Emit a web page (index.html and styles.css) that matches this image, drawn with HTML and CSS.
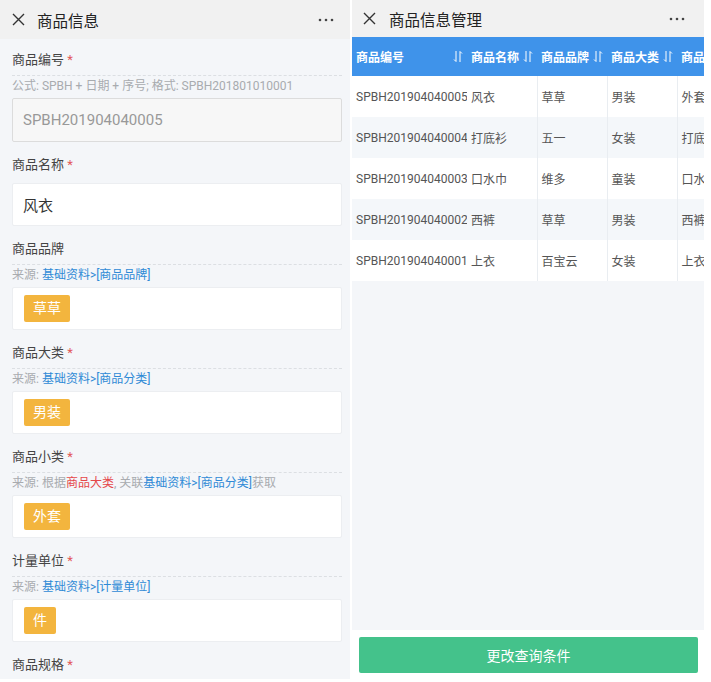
FILE: index.html
```html
<!DOCTYPE html>
<html lang="zh">
<head>
<meta charset="utf-8">
<title>商品信息</title>
<link rel="stylesheet" href="styles.css">
</head>
<body>
<div class="screens">
  <section class="panel left">
    <header class="topbar">
      <svg class="close" width="13" height="13" viewBox="0 0 13 13"><path d="M1 1L12 12M12 1L1 12" stroke="#333" stroke-width="1.4" fill="none"/></svg>
      <span class="title">商品信息</span>
      <svg class="more" width="16" height="4" viewBox="0 0 16 4"><circle cx="2" cy="2" r="1.3" fill="#444"/><circle cx="8" cy="2" r="1.3" fill="#444"/><circle cx="14" cy="2" r="1.3" fill="#444"/></svg>
    </header>
    <div class="form">
      <div class="field">
        <div class="label dashed">商品编号 <span class="req">*</span></div>
        <div class="hint">公式: SPBH + 日期 + 序号; 格式: SPBH201801010001</div>
        <div class="box input disabled">SPBH201904040005</div>
      </div>
      <div class="field">
        <div class="label">商品名称 <span class="req">*</span></div>
        <div class="box input">风衣</div>
      </div>
      <div class="field">
        <div class="label dashed">商品品牌</div>
        <div class="hint">来源: <span class="link">基础资料&gt;[商品品牌]</span></div>
        <div class="box tags"><span class="tag">草草</span></div>
      </div>
      <div class="field">
        <div class="label dashed">商品大类 <span class="req">*</span></div>
        <div class="hint">来源: <span class="link">基础资料&gt;[商品分类]</span></div>
        <div class="box tags"><span class="tag">男装</span></div>
      </div>
      <div class="field">
        <div class="label dashed">商品小类 <span class="req">*</span></div>
        <div class="hint">来源: 根据<span class="red">商品大类</span>, 关联<span class="link">基础资料&gt;[商品分类]</span>获取</div>
        <div class="box tags"><span class="tag">外套</span></div>
      </div>
      <div class="field">
        <div class="label dashed">计量单位 <span class="req">*</span></div>
        <div class="hint">来源: <span class="link">基础资料&gt;[计量单位]</span></div>
        <div class="box tags"><span class="tag">件</span></div>
      </div>
      <div class="field">
        <div class="label dashed">商品规格 <span class="req">*</span></div>
      </div>
    </div>
  </section>

  <section class="panel right">
    <header class="topbar">
      <svg class="close" width="13" height="13" viewBox="0 0 13 13"><path d="M1 1L12 12M12 1L1 12" stroke="#333" stroke-width="1.4" fill="none"/></svg>
      <span class="title">商品信息管理</span>
      <svg class="more" width="16" height="4" viewBox="0 0 16 4"><circle cx="2" cy="2" r="1.3" fill="#444"/><circle cx="8" cy="2" r="1.3" fill="#444"/><circle cx="14" cy="2" r="1.3" fill="#444"/></svg>
    </header>
    <div class="tablewrap">
      <table class="grid">
        <colgroup>
          <col class="c-code"><col class="c-n"><col class="c-n"><col class="c-n"><col class="c-n">
        </colgroup>
        <thead>
          <tr>
            <th><div class="th">商品编号<svg class="sort" width="10" height="13" viewBox="0 0 10 13"><path d="M3 1V11.5L1 9.5M7 12V1.5L9 3.5" stroke="#fff" stroke-width="1" fill="none"/></svg></div></th>
            <th><div class="th">商品名称<svg class="sort" width="10" height="13" viewBox="0 0 10 13"><path d="M3 1V11.5L1 9.5M7 12V1.5L9 3.5" stroke="#fff" stroke-width="1" fill="none"/></svg></div></th>
            <th><div class="th">商品品牌<svg class="sort" width="10" height="13" viewBox="0 0 10 13"><path d="M3 1V11.5L1 9.5M7 12V1.5L9 3.5" stroke="#fff" stroke-width="1" fill="none"/></svg></div></th>
            <th><div class="th">商品大类<svg class="sort" width="10" height="13" viewBox="0 0 10 13"><path d="M3 1V11.5L1 9.5M7 12V1.5L9 3.5" stroke="#fff" stroke-width="1" fill="none"/></svg></div></th>
            <th><div class="th">商品小类<svg class="sort" width="10" height="13" viewBox="0 0 10 13"><path d="M3 1V11.5L1 9.5M7 12V1.5L9 3.5" stroke="#fff" stroke-width="1" fill="none"/></svg></div></th>
          </tr>
        </thead>
        <tbody>
          <tr><td>SPBH201904040005</td><td>风衣</td><td class="vb">草草</td><td class="vb">男装</td><td class="vb">外套</td></tr>
          <tr><td>SPBH201904040004</td><td>打底衫</td><td class="vb">五一</td><td class="vb">女装</td><td class="vb">打底衫</td></tr>
          <tr><td>SPBH201904040003</td><td>口水巾</td><td class="vb">维多</td><td class="vb">童装</td><td class="vb">口水巾</td></tr>
          <tr><td>SPBH201904040002</td><td>西裤</td><td class="vb">草草</td><td class="vb">男装</td><td class="vb">西裤</td></tr>
          <tr><td>SPBH201904040001</td><td>上衣</td><td class="vb">百宝云</td><td class="vb">女装</td><td class="vb">上衣</td></tr>
        </tbody>
      </table>
    </div>
    <div class="spacer"></div>
    <footer class="footer">
      <button class="btn">更改查询条件</button>
    </footer>
  </section>
</div>
</body>
</html>
```

FILE: styles.css
```css
* { box-sizing: border-box; }
html, body { margin: 0; padding: 0; background: #fff; }
body {
  font-family: Roboto, "Noto Sans CJK SC", sans-serif;
  color: #333;
  width: 711px;
  height: 682px;
  overflow: hidden;
}
.screens {
  display: flex;
  gap: 2px;
  align-items: flex-start;
}
.panel {
  height: 679px;
  overflow: hidden;
  background: #f4f6f9;
  display: flex;
  flex-direction: column;
}
.left { width: 350px; }
.right { width: 352px; }

.topbar {
  flex: none;
  height: 39px;
  background: #f1f1f1;
  display: flex;
  align-items: center;
  padding: 0 16px 0 12px;
}
.right .topbar { height: 37px; padding: 0 19px 0 11px; }
.close { flex: none; }
.title {
  font-size: 15.5px;
  color: #222;
  margin-left: 12px;
  flex: 1;
}
.right .title { margin-left: 13px; }
.more { flex: none; }

/* form */
.form { padding: 0 8px 0 12px; }
.field { padding-top: 11px; }
.field + .field { padding-top: 13px; }
.label {
  font-size: 13px;
  line-height: 20px;
  color: #444;
  margin-bottom: 8px;
}
.label.dashed {
  margin-bottom: 0;
  padding-bottom: 5px;
  border-bottom: 1px dashed #dcdfe3;
}
.req { color: #e2575a; }
.hint {
  font-size: 12px;
  line-height: 16px;
  padding-top: 2px;
  margin-bottom: 4px;
  color: #a8abaf;
}
.link { color: #2f8ad6; }
.red { color: #e5474a; }
.box {
  background: #fff;
  border: 1px solid #eceef1;
  border-radius: 2px;
}
.input {
  height: 44px;
  display: flex;
  align-items: center;
  padding-left: 10px;
  font-size: 15px;
  color: #333;
}
.field:nth-child(2) .input { height: 43px; }
.input.disabled {
  background: #f7f7f7;
  border-color: #dcdcdc;
  color: #999;
}
.tags {
  height: 43px;
  padding: 7px 11px;
  display: flex;
  align-items: flex-start;
}
.tag {
  background: #f3b53e;
  color: #fff;
  font-size: 14px;
  line-height: 27px;
  height: 27px;
  padding: 0 9px;
  border-radius: 2px;
}

/* table */
.tablewrap { flex: none; overflow: hidden; }
.grid {
  border-collapse: collapse;
  table-layout: fixed;
  width: 395px;
  font-size: 12px;
}
.c-code { width: 115px; }
.c-n { width: 70px; }
.grid th {
  background: #3f93ea;
  color: #fff;
  height: 39px;
  padding: 0 4px;
  font-weight: bold;
  text-align: left;
}
.th {
  display: flex;
  align-items: center;
  justify-content: space-between;
  white-space: nowrap;
}
.sort { flex: none; margin-left: 1px; }
.grid td {
  height: 41px;
  padding: 0 4px;
  color: #555;
  white-space: nowrap;
  overflow: hidden;
}
.grid tbody tr:nth-child(odd) td { background: #fff; }
.grid tbody tr:nth-child(even) td { background: #f4f7fa; }
.grid td.vb { border-left: 1px solid #e9edf1; }

.spacer { flex: 1; }
.footer {
  flex: none;
  background: #fff;
  height: 49px;
  padding: 7px 6px 6px 7px;
}
.btn {
  display: block;
  width: 100%;
  height: 36px;
  border: 0;
  border-radius: 2px;
  background: #44c28b;
  color: #fff;
  font-family: Roboto, "Noto Sans CJK SC", sans-serif;
  font-size: 14px;
}
```
